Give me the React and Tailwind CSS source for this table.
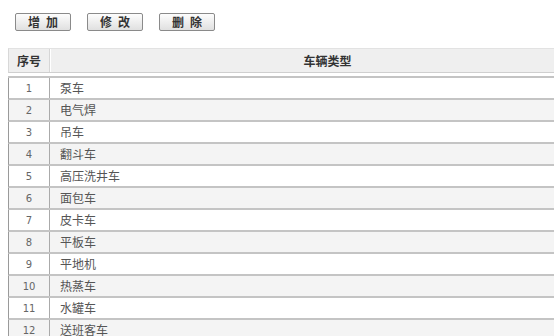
import React from "react";

const rows = ["泵车","电气焊","吊车","翻斗车","高压洗井车","面包车","皮卡车","平板车","平地机","热蒸车","水罐车","送班客车"];

function Btn({ children }) {
  return (
    <button className="w-[56px] h-[18px] border border-[#8a8a8a] rounded-[2px] bg-gradient-to-b from-[#fdfdfd] to-[#e0e0e0] text-[12px] leading-[16px] text-[#333] font-semibold tracking-[6px] pl-[6px]" style={{fontFamily:'"Noto Sans CJK SC", sans-serif'}}>
      {children}
    </button>
  );
}

export default function App() {
  return (
    <div className="w-[554px] h-[336px] overflow-hidden bg-white" style={{fontFamily:'"Noto Sans CJK SC", sans-serif'}}>
      <div className="flex gap-[16px] pl-[15px] pt-[13px]">
        <Btn>增加</Btn>
        <Btn>修改</Btn>
        <Btn>删除</Btn>
      </div>
      <div className="ml-[8px] mt-[17px] w-[596px]">
        <div className="flex h-[25px] bg-[#efefef] border-t border-[#e2e2e2] border-b border-b-[#cfcfcf] border-l border-l-[#d8d8d8]">
          <div className="w-[41px] border-r border-[#d6d6d6] flex items-center justify-center text-[12px] font-bold text-[#333]">序号</div>
          <div className="flex-1 border-l border-white flex items-center justify-center text-[12px] font-bold text-[#333]">车辆类型</div>
        </div>
        <div className="mt-[3px] border-t-2 border-[#c4c4c4]">
          {rows.map((r, i) => (
            <div key={i} className={`flex h-[22px] border-b-2 border-[#c4c4c4] border-l border-l-[#9a9a9a] ${i % 2 ? "bg-[#f4f4f4]" : "bg-white"}`}>
              <div className="w-[41px] border-r border-[#aaa] flex items-center justify-center text-[10px] text-[#666]" style={{fontFamily:'"DejaVu Sans", sans-serif'}}>{i + 1}</div>
              <div className="flex-1 flex items-center pl-[10px] text-[12px] text-[#555]">{r}</div>
            </div>
          ))}
        </div>
      </div>
    </div>
  );
}
